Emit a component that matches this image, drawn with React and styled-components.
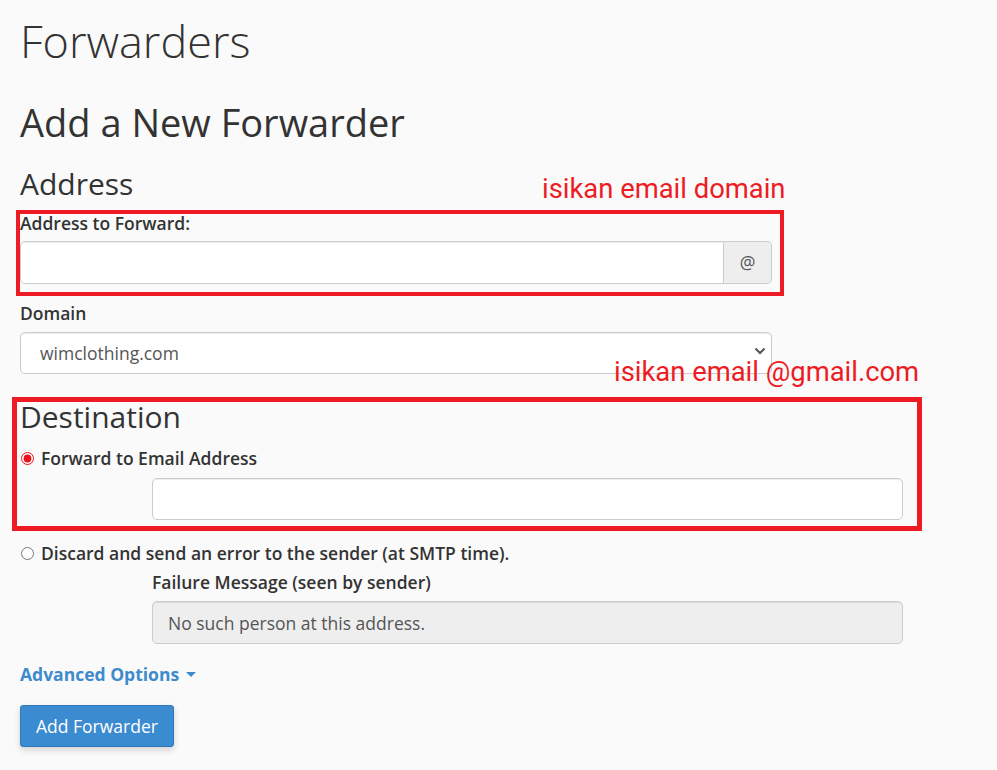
import React from 'react';
import styled, { createGlobalStyle } from 'styled-components';

const GlobalStyle = createGlobalStyle`
  html, body {
    margin: 0;
    padding: 0;
    background: #fafafa;
  }
  body {
    font-family: 'Open Sans', 'Noto Sans', sans-serif;
    font-size: 17.5px;
    line-height: 25px;
    color: #333;
  }
  * { box-sizing: border-box; }
`;

const Page = styled.div`
  position: relative;
  padding: 16px 20px 0;
  min-height: 770px;
`;

const Title = styled.h1`
  margin: 0;
  font-size: 45px;
  line-height: 49.5px;
  font-weight: 300;
  color: #333;
`;

const SubTitle = styled.h2`
  margin: 36px 0 0;
  font-size: 38px;
  line-height: 41.25px;
  font-weight: 400;
  color: #333;
`;

const Section = styled.h3`
  margin: ${p => p.$top}px 0 0;
  font-size: 30px;
  line-height: 33px;
  font-weight: 400;
  color: #333;
`;

const Label = styled.label`
  display: block;
  margin-top: ${p => p.$top}px;
  margin-left: ${p => p.$indent || 0}px;
  font-weight: 600;
  font-size: 17.5px;
  line-height: 25px;
`;

const InputGroup = styled.div`
  display: flex;
  width: 752px;
  height: 42.5px;
  margin-top: ${p => p.$top}px;
`;

const TextInput = styled.input`
  display: block;
  flex: 1;
  height: 42.5px;
  width: ${p => (p.$width ? `${p.$width}px` : 'auto')};
  margin-top: ${p => p.$top || 0}px;
  margin-left: ${p => p.$indent || 0}px;
  padding: 7.5px 15px;
  font-family: inherit;
  font-size: 17.5px;
  color: #555;
  background: ${p => (p.disabled ? '#eee' : '#fff')};
  border: 1px solid #ccc;
  border-radius: ${p => (p.$joined ? '5px 0 0 5px' : '5px')};
  box-shadow: inset 0 1px 1px rgba(0, 0, 0, 0.075);
  outline: none;
  &:disabled { opacity: 1; -webkit-text-fill-color: #555; }
`;

const Addon = styled.span`
  display: flex;
  align-items: center;
  justify-content: center;
  width: 48px;
  background: #eee;
  border: 1px solid #ccc;
  border-left: none;
  border-radius: 0 5px 5px 0;
  color: #555;
  font-size: 17.5px;
`;

const SelectWrap = styled.div`
  position: relative;
  width: 752px;
  margin-top: 6px;
`;

const Select = styled.select`
  display: block;
  width: 100%;
  height: 42.5px;
  padding: 0 15px 0 19px;
  appearance: none;
  font-family: inherit;
  font-size: 17.5px;
  color: #555;
  background: #fff;
  border: 1px solid #ccc;
  border-radius: 5px;
  box-shadow: inset 0 1px 1px rgba(0, 0, 0, 0.075);
`;

const Chevron = styled.svg`
  position: absolute;
  right: 6px;
  top: 15px;
  pointer-events: none;
`;

const RadioRow = styled.label`
  display: flex;
  align-items: center;
  gap: 7px;
  margin-top: ${p => p.$top}px;
  font-weight: 600;
  line-height: 25px;
  input {
    margin: 0 0 0 1px;
    width: 13px;
    height: 13px;
    accent-color: #e8121e;
  }
`;

const Advanced = styled.a`
  display: flex;
  align-items: center;
  gap: 7px;
  margin-top: 18px;
  color: #3d8bcd;
  font-weight: 700;
  text-decoration: none;
  line-height: 25px;
`;

const Caret = styled.span`
  width: 0;
  height: 0;
  border-left: 5px solid transparent;
  border-right: 5px solid transparent;
  border-top: 5px solid #3d8bcd;
`;

const Button = styled.button`
  display: block;
  margin-top: 18.5px;
  height: 42px;
  padding: 0 15px;
  font-family: inherit;
  font-size: 17.5px;
  color: #fff;
  background: #3b8bd1;
  border: 1px solid #3078b8;
  border-radius: 3px;
  box-shadow: 0 3px 6px rgba(0, 0, 0, 0.16);
`;

/* red annotations drawn over the form */
const Marker = styled.div`
  position: absolute;
  left: ${p => p.$x}px;
  top: ${p => p.$y}px;
  width: ${p => p.$w}px;
  height: ${p => p.$h}px;
  border: ${p => p.$b}px solid #ed1c24;
  pointer-events: none;
`;

const Note = styled.div`
  position: absolute;
  left: ${p => p.$x}px;
  top: ${p => p.$y}px;
  font-family: Roboto, 'Noto Sans', sans-serif;
  font-size: 27.4px;
  line-height: 30px;
  color: #ed1c24;
  white-space: nowrap;
`;

export default function App() {
  return (
    <>
      <GlobalStyle />
      <Page>
        <Title>Forwarders</Title>
        <SubTitle>Add a New Forwarder</SubTitle>

        <Section $top={24}>Address</Section>
        <Label $top={11.5}>Address to Forward:</Label>
        <InputGroup $top={5}>
          <TextInput $joined type="text" />
          <Addon>@</Addon>
        </InputGroup>

        <Label $top={17}>Domain</Label>
        <SelectWrap>
          <Select defaultValue="wimclothing.com">
            <option>wimclothing.com</option>
          </Select>
          <Chevron width="12" height="8" viewBox="0 0 12 8">
            <path d="M1.5 1.5 L6 6 L10.5 1.5" fill="none" stroke="#555" strokeWidth="2" />
          </Chevron>
        </SelectWrap>

        <Section $top={25.5}>Destination</Section>
        <RadioRow $top={13.5}>
          <input type="radio" name="dest" defaultChecked />
          Forward to Email Address
        </RadioRow>
        <TextInput type="text" $top={6.5} $indent={132} $width={751} />

        <RadioRow $top={21}>
          <input type="radio" name="dest" />
          Discard and send an error to the sender (at SMTP time).
        </RadioRow>
        <Label $top={4} $indent={132}>Failure Message (seen by sender)</Label>
        <TextInput
          type="text"
          disabled
          defaultValue="No such person at this address."
          $top={6}
          $indent={132}
          $width={751}
        />

        <Advanced href="#">
          Advanced Options <Caret />
        </Advanced>
        <Button>Add Forwarder</Button>

        <Marker $x={16} $y={210} $w={768} $h={86} $b={4} />
        <Note $x={542} $y={174}>isikan email domain</Note>
        <Marker $x={12} $y={397} $w={910} $h={134} $b={5} />
        <Note $x={614} $y={357}>isikan email @gmail.com</Note>
      </Page>
    </>
  );
}
